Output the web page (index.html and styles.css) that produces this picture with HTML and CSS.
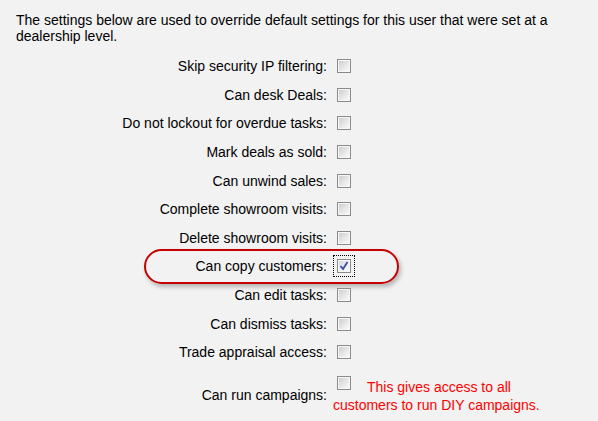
FILE: index.html
```html
<!DOCTYPE html>
<html>
<head>
<meta charset="utf-8">
<link rel="stylesheet" href="styles.css">
</head>
<body>
<p class="intro">The settings below are used to override default settings for this user that were set at a dealership level.</p>
<div class="settings">
  <div class="row"><span class="label">Skip security IP filtering:</span><span class="value"><span class="cb"></span></span></div>
  <div class="row"><span class="label">Can desk Deals:</span><span class="value"><span class="cb"></span></span></div>
  <div class="row"><span class="label">Do not lockout for overdue tasks:</span><span class="value"><span class="cb"></span></span></div>
  <div class="row"><span class="label">Mark deals as sold:</span><span class="value"><span class="cb"></span></span></div>
  <div class="row"><span class="label">Can unwind sales:</span><span class="value"><span class="cb"></span></span></div>
  <div class="row"><span class="label">Complete showroom visits:</span><span class="value"><span class="cb"></span></span></div>
  <div class="row"><span class="label">Delete showroom visits:</span><span class="value"><span class="cb"></span></span></div>
  <div class="row highlight"><span class="label">Can copy customers:</span><span class="value"><span class="cb checked focus"><svg width="14" height="14" viewBox="0 0 14 14"><polyline points="3.5,7 6,10 10.5,3" fill="none" stroke="#3b4c9a" stroke-width="1.8"/></svg></span></span><span class="ring"></span></div>
  <div class="row"><span class="label">Can edit tasks:</span><span class="value"><span class="cb"></span></span></div>
  <div class="row"><span class="label">Can dismiss tasks:</span><span class="value"><span class="cb"></span></span></div>
  <div class="row"><span class="label">Trade appraisal access:</span><span class="value"><span class="cb"></span></span></div>
  <div class="row last"><span class="label">Can run campaigns:</span><span class="value note"><span class="cb"></span>This gives access to all customers to run DIY campaigns.</span></div>
</div>
</body>
</html>
```

FILE: styles.css
```css
html, body {
  margin: 0;
  padding: 0;
  background: #f2f2f2;
}
body {
  font-family: "Liberation Sans", Arial, sans-serif;
  font-size: 14px;
  color: #000;
  width: 598px;
  height: 421px;
  overflow: hidden;
}
.intro {
  margin: 12px 30px 0 16px;
  line-height: 16px;
}
.settings {
  margin: 8px 0 0 16px;
  display: grid;
  grid-template-columns: 311px 230px;
  column-gap: 6px;
}
.row {
  display: contents;
}
.label, .value {
  height: 28.6px;
  display: flex;
  align-items: center;
}
.label {
  justify-content: flex-end;
}
.cb {
  display: inline-block;
  box-sizing: border-box;
  width: 14px;
  height: 14px;
  margin-left: 4px;
  border: 1px solid #8a8a8a;
  background: linear-gradient(135deg, #c9c9c9 0%, #e8e8e8 55%, #fbfbfb 100%);
  box-shadow: inset 0 0 0 1px #f8f8f8;
  position: relative;
}
.cb svg {
  position: absolute;
  left: -1px;
  top: -1px;
}
.cb.checked {
  background: linear-gradient(135deg, #d2d6e2 0%, #eceef3 55%, #fdfdfd 100%);
}
.cb.focus {
  outline: 1px dotted #000;
  outline-offset: 3px;
}
.highlight {
  position: relative;
}
.ring {
  position: absolute;
  left: 144px;
  top: 249px;
  width: 255px;
  height: 35px;
  box-sizing: border-box;
  border: 2px solid #c40000;
  border-radius: 18px;
  box-shadow: 2px 3px 4px rgba(0,0,0,0.25);
  pointer-events: none;
}
.last .label {
  height: 57px;
}
.last .value.note {
  height: auto;
  display: block;
  color: #f00;
  line-height: 18px;
  padding-top: 9px;
}
.note .cb {
  vertical-align: 2px;
  margin-right: 16px;
}
```
